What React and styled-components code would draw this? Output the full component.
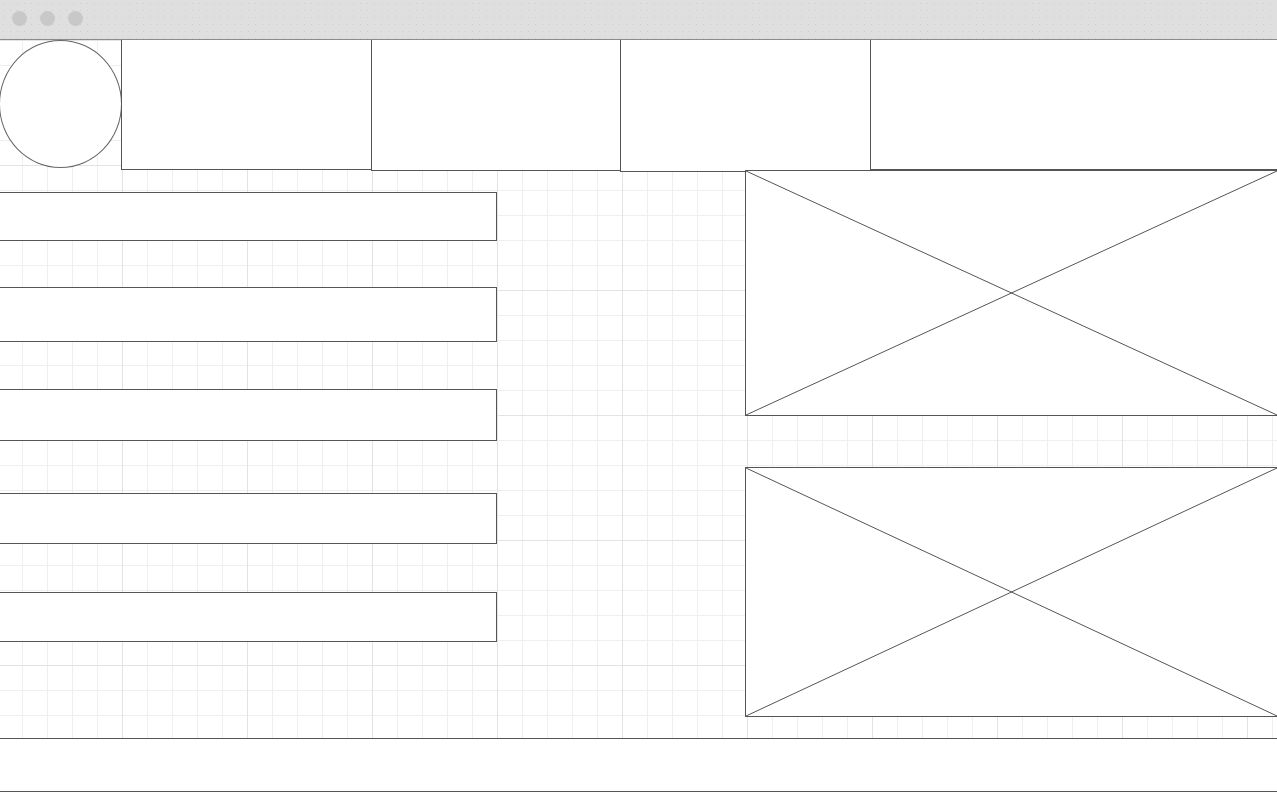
import styled, { createGlobalStyle } from "styled-components";

const GlobalStyle = createGlobalStyle`
  html, body {
    margin: 0;
    padding: 0;
    background: #ffffff;
    font-family: "Liberation Sans", Arial, sans-serif;
    overflow: hidden;
  }
`

const Page = styled.div`
  width: 1277px;
  height: 793px;
  display: flex;
  flex-direction: column;
  overflow: hidden;
  background: #fff;
`

const TitleBar = styled.div`
  height: 40px;
  border-bottom: 1px solid #8c8c8c;
  background-color: #dfdfdf;
  background-image: radial-gradient(circle, #cdcdcd 0.7px, transparent 1px);
  background-size: 7px 7px;
  display: flex;
  align-items: center;
  gap: 13px;
  padding-left: 12px;
  padding-bottom: 3px;
  box-sizing: border-box;
`

const Dot = styled.span`
  width: 15px;
  height: 15px;
  border-radius: 50%;
  background: #c8c8c8;
`

const Canvas = styled.div`
  height: 698px;
  display: flex;
  flex-direction: column;
  background-color: #fff;
  background-image:
    linear-gradient(to right, #e3e3e3 1px, transparent 1px),
    linear-gradient(to bottom, #e3e3e3 1px, transparent 1px),
    linear-gradient(to right, #efefef 1px, transparent 1px),
    linear-gradient(to bottom, #efefef 1px, transparent 1px);
  background-size: 125px 125px, 125px 125px, 25px 25px, 25px 25px;
  background-position: 122px 0, 0 0, 22px 0, 0 0;
`

const Header = styled.div`
  height: 130px;
  display: flex;
  align-items: flex-start;
  flex-shrink: 0;
`

const Avatar = styled.div`
  width: 123px;
  height: 128px;
  margin-left: -1px;
  margin-right: -1px;
  border: 1px solid #666;
  border-radius: 50%;
  background: #fff;
  box-sizing: border-box;
  flex-shrink: 0;
`

const HeadBox = styled.div`
  width: ${(p) => p.$w}px;
  height: ${(p) => p.$h}px;
  border-left: 1px solid #555;
  border-bottom: 1px solid #555;
  background: #fff;
  box-sizing: border-box;
  flex-shrink: 0;
`

const Body = styled.div`
  flex: 1;
  display: flex;
  justify-content: space-between;
`

const BarColumn = styled.div`
  width: 497px;
  display: flex;
  flex-direction: column;
`

const Bar = styled.div`
  height: ${(p) => p.$h}px;
  margin-top: ${(p) => p.$gap}px;
  border: 1px solid #555;
  border-left: none;
  background: #fff;
  box-sizing: border-box;
`

const MediaColumn = styled.div`
  width: 532px;
  display: flex;
  flex-direction: column;
  gap: 51px;
`

const Placeholder = styled.div`
  height: ${(p) => p.$h}px;
  border: 1px solid #555;
  border-right: none;
  background: #fff;
  box-sizing: border-box;

  svg {
    display: block;
    width: 100%;
    height: 100%;
  }
`

const Footer = styled.div`
  height: 54px;
  border-top: 1px solid #555;
  border-bottom: 1px solid #555;
  background: #fff;
  box-sizing: border-box;
`

const heads = [
  { w: 250, h: 130 },
  { w: 249, h: 131 },
  { w: 250, h: 132 },
  { w: 407, h: 130 },
]

const bars = [
  { gap: 22, h: 49 },
  { gap: 46, h: 55 },
  { gap: 47, h: 52 },
  { gap: 52, h: 51 },
  { gap: 48, h: 50 },
]

const Cross = () => (
  <svg viewBox="0 0 100 100" preserveAspectRatio="none">
    <line x1="0" y1="0" x2="100" y2="100" stroke="#555" strokeWidth="1" vectorEffect="non-scaling-stroke" />
    <line x1="0" y1="100" x2="100" y2="0" stroke="#555" strokeWidth="1" vectorEffect="non-scaling-stroke" />
  </svg>
)

const App = () => {
  return (
    <Page>
      <GlobalStyle />
      <TitleBar>
        <Dot />
        <Dot />
        <Dot />
      </TitleBar>
      <Canvas>
        <Header>
          <Avatar />
          {heads.map((b, i) => (
            <HeadBox key={i} $w={b.w} $h={b.h} />
          ))}
        </Header>
        <Body>
          <BarColumn>
            {bars.map((b, i) => (
              <Bar key={i} $gap={b.gap} $h={b.h} />
            ))}
          </BarColumn>
          <MediaColumn>
            <Placeholder $h={246}>
              <Cross />
            </Placeholder>
            <Placeholder $h={250}>
              <Cross />
            </Placeholder>
          </MediaColumn>
        </Body>
      </Canvas>
      <Footer />
    </Page>
  )
}

export default App
